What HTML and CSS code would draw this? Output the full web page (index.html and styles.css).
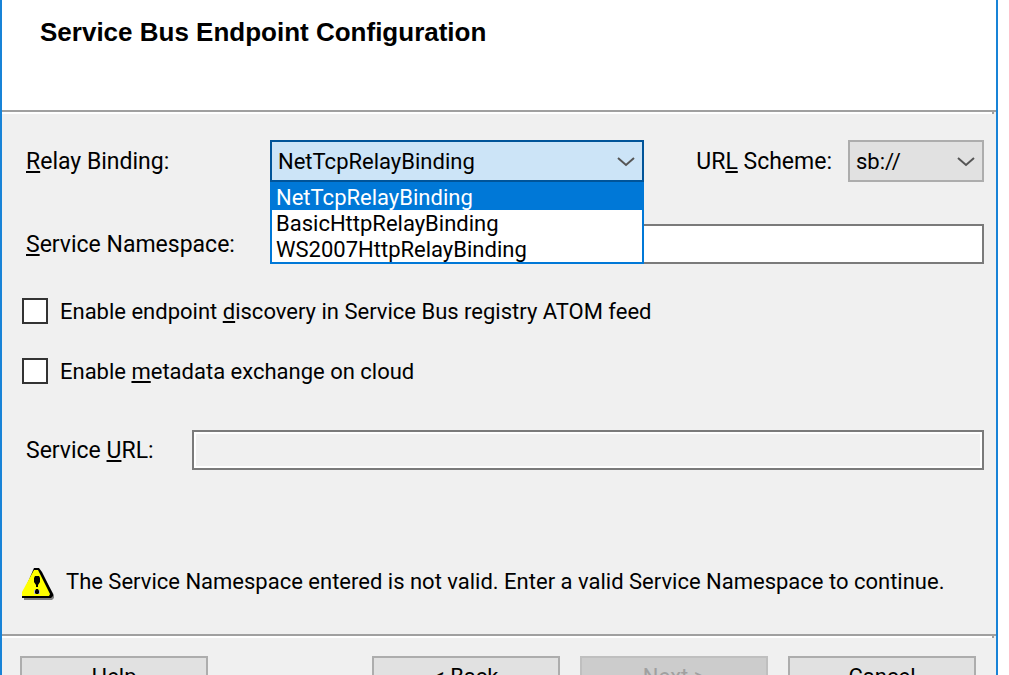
FILE: index.html
```
<!DOCTYPE html>
<html lang="en">
<head>
    <meta charset="UTF-8">
    <meta name="viewport" content="width=device-width, initial-scale=1.0">
    <title>Service Bus Endpoint Configuration</title>
    <link rel="stylesheet" href="styles.css">
</head>
<body>
    <form class="wizard">
        <header class="wizard-header">
            <h1>Service Bus Endpoint Configuration</h1>
        </header>
        <div class="separator"></div>

        <main class="wizard-body">
            <div class="row binding-row">
                <label class="label-wide" for="binding"><u>R</u>elay Binding:</label>
                <div class="combo combo-open">
                    <select id="binding">
                        <option selected>NetTcpRelayBinding</option>
                        <option>BasicHttpRelayBinding</option>
                        <option>WS2007HttpRelayBinding</option>
                    </select>
                    <svg class="chevron" viewBox="0 0 18 12"><path d="M1 2l8 7 8-7"/></svg>
                    <ul class="combo-list" role="listbox" aria-label="Relay Binding">
                        <li class="selected" role="option" aria-selected="true">NetTcpRelayBinding</li>
                        <li role="option">BasicHttpRelayBinding</li>
                        <li role="option">WS2007HttpRelayBinding</li>
                    </ul>
                </div>
                <label class="label-scheme" for="scheme">UR<u>L</u> Scheme:</label>
                <div class="combo combo-scheme">
                    <select id="scheme">
                        <option selected>sb://</option>
                    </select>
                    <svg class="chevron" viewBox="0 0 18 12"><path d="M1 2l8 7 8-7"/></svg>
                </div>
            </div>

            <div class="row namespace-row">
                <label class="label-wide" for="namespace"><u>S</u>ervice Namespace:</label>
                <input class="field" type="text" id="namespace">
            </div>

            <div class="check">
                <input type="checkbox" id="discovery">
                <label for="discovery">Enable endpoint <u>d</u>iscovery in Service Bus registry ATOM feed</label>
            </div>
            <div class="check">
                <input type="checkbox" id="metadata">
                <label for="metadata">Enable <u>m</u>etadata exchange on cloud</label>
            </div>

            <div class="row url-row">
                <label class="label-narrow" for="url">Service <u>U</u>RL:</label>
                <input class="field" type="text" id="url" readonly>
            </div>

            <div class="warning" role="alert">
                <svg class="warning-icon" viewBox="0 0 32 32">
                    <path fill="#808080" d="M18 3l14 24v3l-2 2H2v-3z"/>
                    <path fill="#000" d="M12 0h5l3 4 11 22v2l-2 2H0v-2z"/>
                    <path fill="#ff0" d="M12 2h4l12 24-1 2H0v-4z"/>
                    <path fill="#000" d="M13 8h4l1 2v4l-2 3v2h-2v-2l-2-3v-4z"/>
                    <path fill="#c0c0c0" d="M12 22h6v4h-6z"/>
                    <path fill="#000" d="M14 21h2l1 2v2l-1 1h-2l-1-1v-2z"/>
                </svg>
                <span>The Service Namespace entered is not valid. Enter a valid Service Namespace to continue.</span>
            </div>
        </main>

        <div class="separator"></div>
        <footer class="wizard-footer">
            <button class="help" type="button">Help</button>
            <button type="button">&lt; Back</button>
            <button type="button" disabled>Next &gt;</button>
            <button type="button">Cancel</button>
        </footer>
    </form>
</body>
</html>
```

FILE: styles.css
```
* {
    box-sizing: border-box;
}
body {
    margin: 0;
    height: 100vh;
    overflow: hidden;
    background: #fff;
    color: #000;
    font-family: Roboto, "Liberation Sans", sans-serif;
    font-size: 22px;
    line-height: 28px;
}
.wizard {
    min-height: 100vh;
    margin-right: 11px;
    border: solid #1883d7;
    border-width: 0 2px;
    background: #f0f0f0;
}
.wizard-header {
    height: 110px;
    padding: 18px 38px;
    background: #fff;
}
h1 {
    margin: 0;
    font-family: "Liberation Sans", Arial, sans-serif;
    font-size: 26px;
    line-height: 28px;
}
.separator {
    border-top: 2px solid #a0a0a0;
}
.separator::after {
    content: "";
    display: block;
    height: 2px;
    margin-right: 2px;
    border-right: 2px solid #a0a0a0;
    background: #fff;
}
u {
    text-decoration-thickness: 2px;
    text-underline-offset: 2px;
    text-decoration-skip-ink: none;
}
.wizard-body {
    padding: 26px 12px 34px 20px;
}
.row {
    display: flex;
    align-items: center;
    padding-left: 4px;
}
.row label {
    padding-top: 2px;
    font-size: 23px;
}
.label-wide {
    flex: 0 0 244px;
}
.label-narrow {
    flex: 0 0 166px;
}
.label-scheme {
    flex: 0 0 204px;
    padding-right: 16px;
    text-align: right;
}
select,
.field,
button {
    font: inherit;
    color: inherit;
    border-radius: 0;
}
.combo {
    position: relative;
    height: 42px;
}
.combo-open {
    flex: 1;
}
.combo-scheme {
    flex: 0 0 136px;
}
.combo select {
    appearance: none;
    width: 100%;
    height: 100%;
    padding: 2px 6px 0;
    border: 2px solid #adadad;
    background: #e1e1e1;
}
.combo-open select {
    border-color: #005499;
    background: #cce4f7;
}
.chevron {
    position: absolute;
    top: 16px;
    right: 9px;
    width: 18px;
    height: 12px;
    fill: none;
    stroke: #555;
    stroke-width: 2;
    pointer-events: none;
}
.combo-list {
    position: absolute;
    top: 100%;
    left: 0;
    right: 0;
    z-index: 1;
    margin: 0;
    padding: 0;
    list-style: none;
    border: 2px solid #0078d7;
    border-top: 0;
    background: #fff;
    line-height: 26px;
}
.combo-list li {
    height: 26px;
    padding: 1px 4px 0;
}
.combo-list .selected {
    height: 28px;
    padding-top: 3px;
    background: #0078d7;
    color: #fff;
}
.namespace-row {
    margin: 42px 0 34px;
}
.field {
    flex: 1;
    min-width: 0;
    height: 40px;
    border: 2px solid #7a7a7a;
    background: #fff;
}
.field:read-only {
    background: #f0f0f0;
    box-shadow: inset 0 0 0 2px #fff;
}
.check {
    display: flex;
    align-items: center;
    gap: 12px;
    height: 26px;
    margin-bottom: 34px;
}
.check label {
    padding-top: 2px;
}
.check input {
    appearance: none;
    width: 26px;
    height: 26px;
    margin: 0;
    border: 2px solid #333;
    background: #fff;
}
.url-row {
    margin: 46px 0 98px;
}
.warning {
    display: flex;
    gap: 12px;
}
.warning-icon {
    flex: none;
    width: 32px;
    height: 32px;
}
.wizard-footer {
    display: flex;
    gap: 20px;
    padding: 18px 20px 20px 18px;
}
button {
    width: 188px;
    height: 42px;
    padding: 0;
    border: 2px solid #adadad;
    background: #e1e1e1;
}
button:disabled {
    border-color: #bfbfbf;
    background: #ccc;
    color: #a0a0a0;
}
.help {
    margin-right: auto;
}
```
